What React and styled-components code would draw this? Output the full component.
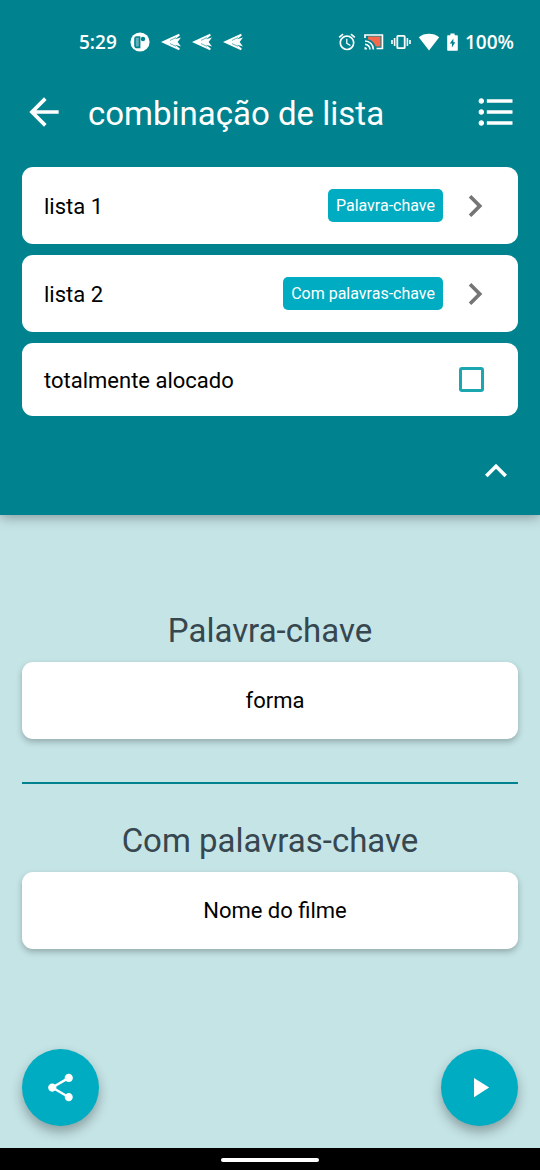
import React, { useCallback, useState } from "react";
import styled, { createGlobalStyle } from "styled-components";
import {
  MdAlarm,
  MdArrowBack,
  MdChevronRight,
  MdExpandLess,
  MdFormatListBulleted,
  MdPlayArrow,
  MdShare,
} from "react-icons/md";

const lists = [
  { id: 1, name: "lista 1", title: "Palavra-chave", value: "forma" },
  { id: 2, name: "lista 2", title: "Com palavras-chave", value: "Nome do filme" },
];

const ParkingIcon = () => (
  <svg width="20" height="20" viewBox="0 0 20 20" aria-hidden="true">
    <circle cx="10" cy="10" r="9.6" fill="#fff" />
    <path d="M9.6 5H6.6Q5 5 5 6.6V13.4Q5 15.4 7 15.4H9.6Z" fill="#5fb3ba" stroke="#00838f" strokeWidth="1.6" />
    <circle cx="13" cy="7" r="2.2" fill="#00838f" />
  </svg>
);

const PlaneIcon = () => (
  <svg width="20" height="18" viewBox="0 0 20 18" aria-hidden="true">
    <path d="M0 9L18 0.8 18.8 2.4 14 6.2 20 4.6 16.6 9 20 13.4 14 11.8 18.8 15.6 18 17.2Z" fill="#fff" />
    <path d="M9 7.4L15 4.6M9 10.6L15 13.4" stroke="#00838f" strokeWidth="0.6" fill="none" />
  </svg>
);

const CastIcon = () => (
  <svg width="20" height="18" viewBox="0 0 20 18" aria-hidden="true">
    <path d="M4 3.5H16.5V13.5H11.5C11 10 8 7 4 6.5Z" fill="#f4694c" />
    <path d="M1 5V2H18.4V15.5H12.5" fill="none" stroke="#fff" strokeWidth="1.7" />
    <path d="M1 8A8.4 8.4 0 0 1 9.4 16.4M1 11.4A5 5 0 0 1 6 16.4" fill="none" stroke="#fff" strokeWidth="1.6" />
    <path d="M0.5 14A2.6 2.6 0 0 1 3.1 16.6H0.5Z" fill="#fff" />
  </svg>
);

const VibrationIcon = () => (
  <svg width="20" height="16" viewBox="0 0 20 16" aria-hidden="true">
    <rect x="6.3" y="1.8" width="7.4" height="12.4" rx="0.8" fill="none" stroke="#fff" strokeWidth="1.8" />
    <path d="M3.6 4V12M16.4 4V12M1 6V10M19 6V10" stroke="#fff" strokeWidth="1.6" />
  </svg>
);

const WifiIcon = () => (
  <svg width="22" height="18" viewBox="0 0 22 18" aria-hidden="true">
    <path d="M11 17.4L0.8 4.2C6.5-0.3 15.5-0.3 21.2 4.2Z" fill="#fff" />
  </svg>
);

const BatteryIcon = () => (
  <svg width="11" height="18" viewBox="0 0 11 18" aria-hidden="true">
    <path d="M3.4 0.4H7.6V2.2H10.2Q10.8 2.2 10.8 2.9V17Q10.8 17.7 10.2 17.7H0.8Q0.2 17.7 0.2 17V2.9Q0.2 2.2 0.8 2.2H3.4Z" fill="#fff" />
    <path d="M6.4 5.4L2.8 10.6H4.9V14.6L8.3 9.2H6.4Z" fill="#00838f" />
  </svg>
);

const App = () => {
  const [allocated, setAllocated] = useState(false);
  const [open, setOpen] = useState(true);

  const onToggle = useCallback(() => setOpen((value) => !value), []);
  const onAllocate = useCallback((e) => setAllocated(e.target.checked), []);

  return (
    <Screen>
      <GlobalStyle />
      <Header>
        <StatusBar>
          <StatusGroup $gap={11}>
            <StatusTime>5:29</StatusTime>
            <ParkingIcon />
            <PlaneIcon />
            <PlaneIcon />
            <PlaneIcon />
          </StatusGroup>
          <StatusGroup $gap={7}>
            <MdAlarm size={20} />
            <CastIcon />
            <VibrationIcon />
            <WifiIcon />
            <BatteryIcon />
            <span>100%</span>
          </StatusGroup>
        </StatusBar>
        <AppBar>
          <IconButton aria-label="Voltar"><MdArrowBack size={44} /></IconButton>
          <Title>combinação de lista</Title>
          <IconButton aria-label="Listas"><MdFormatListBulleted size={44} /></IconButton>
        </AppBar>
        {open && (
          <Settings>
            {lists.map(({ id, name, title }) => (
              <ListRow key={id}>
                <RowName>{name}</RowName>
                <Badge>{title}</Badge>
                <MdChevronRight size={44} />
              </ListRow>
            ))}
            <CheckRow>
              <RowName>totalmente alocado</RowName>
              <Checkbox type="checkbox" checked={allocated} onChange={onAllocate} />
            </CheckRow>
          </Settings>
        )}
        <ToggleBar>
          <IconButton aria-label="Recolher" aria-expanded={open} onClick={onToggle}>
            <MdExpandLess size={44} />
          </IconButton>
        </ToggleBar>
      </Header>
      <Content>
        {lists.map(({ id, title, value }) => (
          <Section key={id}>
            <SectionTitle>{title}</SectionTitle>
            <ResultCard>{value}</ResultCard>
          </Section>
        ))}
      </Content>
      <Actions>
        <Fab aria-label="Compartilhar"><MdShare size={33} /></Fab>
        <Fab aria-label="Iniciar"><MdPlayArrow size={33} /></Fab>
      </Actions>
      <NavBar>
        <NavHandle />
      </NavBar>
    </Screen>
  );
}

const GlobalStyle = createGlobalStyle`
  * {
    box-sizing: border-box;
  }
  body {
    margin: 0;
    font-family: Roboto, "Liberation Sans", sans-serif;
    background: #c5e4e6;
  }
  button {
    font: inherit;
    border: none;
    padding: 0;
    cursor: pointer;
  }
  svg {
    display: block;
    flex: none;
  }
`;

const Screen = styled.div`
  display: flex;
  flex-direction: column;
  min-height: 100vh;
`;

const Header = styled.header`
  padding: 0 22px 22px;
  background: #00838f;
  color: #fff;
  box-shadow: 0 2px 12px rgba(0, 0, 0, 0.35);
`;

const StatusBar = styled.div`
  display: flex;
  align-items: center;
  justify-content: space-between;
  height: 84px;
  padding: 0 4px 0 57px;
  font-family: "Open Sans", Lato, sans-serif;
  font-size: 19px;
  font-weight: 600;
`;

const StatusGroup = styled.div`
  display: flex;
  align-items: center;
  gap: ${({ $gap }) => $gap}px;
`;

const StatusTime = styled.span`
  margin-right: 2px;
`;

const AppBar = styled.div`
  display: flex;
  align-items: center;
  gap: 22px;
  height: 56px;
`;

const IconButton = styled.button`
  background: none;
  color: inherit;
`;

const Title = styled.h1`
  flex: 1;
  margin: 0;
  padding-top: 2px;
  font-size: 33px;
  font-weight: 400;
`;

const Settings = styled.div`
  display: flex;
  flex-direction: column;
  gap: 11px;
  padding-top: 27px;
`;

const ListRow = styled.button`
  display: flex;
  align-items: center;
  height: 77px;
  padding: 0 21px 0 22px;
  border-radius: 11px;
  background: #fff;
  color: #757575;
`;

const RowName = styled.span`
  flex: 1;
  padding-top: 2px;
  font-size: 22px;
  text-align: left;
  color: #000;
`;

const Badge = styled.span`
  margin-right: 10px;
  padding: 1px 8px 0;
  border-radius: 5px;
  font-size: 16px;
  line-height: 32px;
  background: #00acc1;
  color: #fff;
`;

const CheckRow = styled.label`
  display: flex;
  align-items: center;
  height: 73px;
  padding: 0 34px 0 22px;
  border-radius: 11px;
  background: #fff;
`;

const Checkbox = styled.input`
  appearance: none;
  width: 25px;
  height: 25px;
  margin: 0;
  border: 3px solid #1ba6b0;
  border-radius: 3px;

  &:checked {
    background: #1ba6b0;
  }
`;

const ToggleBar = styled.div`
  display: flex;
  justify-content: flex-end;
  padding-top: 33px;
`;

const Content = styled.main`
  flex: 1;
  padding: 96px 22px 22px;
`;

const Section = styled.section`
  & + & {
    margin-top: 43px;
    padding-top: 37px;
    border-top: 2px solid #00838f;
  }
`;

const SectionTitle = styled.h2`
  margin: 0 0 11px;
  font-size: 33px;
  font-weight: 400;
  line-height: 40px;
  text-align: center;
  color: #37474f;
`;

const ResultCard = styled.div`
  display: flex;
  align-items: center;
  justify-content: center;
  height: 77px;
  padding-left: 10px;
  border-radius: 11px;
  font-size: 22px;
  background: #fff;
  color: #000;
  box-shadow: 0 3px 6px rgba(0, 0, 0, 0.25);
`;

const Actions = styled.div`
  display: flex;
  justify-content: space-between;
  padding: 0 22px 22px;
`;

const Fab = styled.button`
  display: flex;
  align-items: center;
  justify-content: center;
  width: 77px;
  height: 77px;
  border-radius: 50%;
  background: #00acc1;
  color: #fff;
  box-shadow: 0 6px 12px rgba(0, 0, 0, 0.3);
`;

const NavBar = styled.footer`
  display: flex;
  align-items: center;
  justify-content: center;
  height: 22px;
  padding-top: 2px;
  background: #000;
`;

const NavHandle = styled.div`
  width: 98px;
  height: 4px;
  border-radius: 2px;
  background: #fff;
`;

export default App;
